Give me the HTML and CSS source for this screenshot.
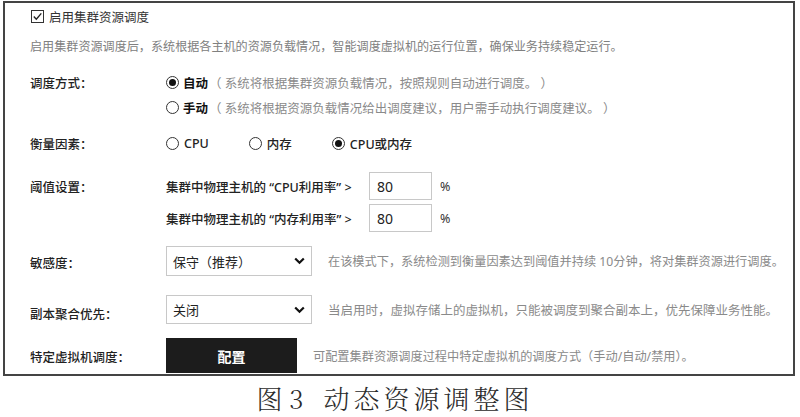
FILE: index.html
```html
<!DOCTYPE html>
<html lang="zh-CN">
<head>
<meta charset="utf-8">
<title>动态资源调整图</title>
<link rel="stylesheet" href="styles.css">
</head>
<body>
<div class="frame">
  <div class="row-check">
    <svg class="checkbox" width="13" height="13" viewBox="0 0 13 13"><rect x="0.5" y="0.5" width="12" height="12" fill="#fff" stroke="#333" stroke-width="1"/><path d="M2.8 6.6 L5.3 9.2 L10.3 3.4" fill="none" stroke="#222" stroke-width="1.4"/></svg>
    <span class="check-label">启用集群资源调度</span>
  </div>
  <div class="row-desc">启用集群资源调度后，系统根据各主机的资源负载情况，智能调度虚拟机的运行位置，确保业务持续稳定运行。</div>

  <div class="field field-mode">
    <div class="label">调度方式：</div>
    <div class="content">
      <div class="line"><span class="radio checked"></span><b class="opt">自动</b><span class="hint">（ 系统将根据集群资源负载情况，按照规则自动进行调度。 ）</span></div>
      <div class="line"><span class="radio"></span><b class="opt">手动</b><span class="hint">（ 系统将根据资源负载情况给出调度建议，用户需手动执行调度建议。 ）</span></div>
    </div>
  </div>

  <div class="field field-factor">
    <div class="label">衡量因素：</div>
    <div class="content radios">
      <span class="ritem"><span class="radio"></span><span class="rtext">CPU</span></span>
      <span class="ritem"><span class="radio"></span><span class="rtext">内存</span></span>
      <span class="ritem"><span class="radio checked"></span><span class="rtext">CPU或内存</span></span>
    </div>
  </div>

  <div class="field field-threshold">
    <div class="label">阈值设置：</div>
    <div class="content">
      <div class="tline"><span class="ttext">集群中物理主机的 “CPU利用率” &gt;</span><span class="input">80</span><span class="pct">%</span></div>
      <div class="tline"><span class="ttext">集群中物理主机的 “内存利用率” &gt;</span><span class="input">80</span><span class="pct">%</span></div>
    </div>
  </div>

  <div class="field field-sens">
    <div class="label">敏感度：</div>
    <div class="content inline">
      <div class="select"><span>保守（推荐）</span><svg class="chev" width="11" height="8" viewBox="0 0 11 8"><path d="M1.2 1.5 L5.5 5.8 L9.8 1.5" fill="none" stroke="#111" stroke-width="2.2"/></svg></div>
      <span class="hint side">在该模式下，系统检测到衡量因素达到阈值并持续 10分钟，将对集群资源进行调度。</span>
    </div>
  </div>

  <div class="field field-replica">
    <div class="label label-low">副本聚合优先：</div>
    <div class="content inline">
      <div class="select"><span>关闭</span><svg class="chev" width="11" height="8" viewBox="0 0 11 8"><path d="M1.2 1.5 L5.5 5.8 L9.8 1.5" fill="none" stroke="#111" stroke-width="2.2"/></svg></div>
      <span class="hint side">当启用时，虚拟存储上的虚拟机，只能被调度到聚合副本上，优先保障业务性能。</span>
    </div>
  </div>

  <div class="field field-vm">
    <div class="label">特定虚拟机调度：</div>
    <div class="content inline">
      <div class="button">配置</div>
      <span class="hint side">可配置集群资源调度过程中特定虚拟机的调度方式（手动/自动/禁用）。</span>
    </div>
  </div>
</div>
<div class="caption"><span class="fig">图 3</span><span class="title">动态资源调整图</span></div>
</body>
</html>
```

FILE: styles.css
```css
html, body {
  margin: 0;
  padding: 0;
  background: #fff;
}
body {
  width: 800px;
  height: 417px;
  overflow: hidden;
  font-family: "Noto Sans", "Noto Sans CJK SC", sans-serif;
  font-size: 12.5px;
  color: #222;
}
.frame {
  box-sizing: border-box;
  margin: 1px 0 0 3px;
  width: 792px;
  height: 375px;
  border: 2px solid #444;
  padding-left: 25px;
  display: flex;
  flex-direction: column;
}
.row-check {
  height: 26px;
  display: flex;
  align-items: center;
  padding-left: 1px;
}
.checkbox {
  display: block;
  margin-right: 5px;
}
.check-label {
  color: #333;
}
.row-desc {
  height: 34px;
  display: flex;
  align-items: center;
  color: #808080;
  font-size: 12.1px;
  white-space: nowrap;
}
.field {
  display: flex;
}
.label {
  width: 136px;
  flex: none;
  color: #222;
  font-weight: 500;
  display: flex;
  align-items: center;
}
.content {
  flex: 1;
}
.field-mode {
  margin-top: 7px;
}
.field-mode .label {
  height: 25px;
  align-self: flex-start;
}
.line {
  height: 25px;
  display: flex;
  align-items: center;
  white-space: pre;
}
.radio {
  box-sizing: border-box;
  width: 13px;
  height: 13px;
  border: 1px solid #333;
  border-radius: 50%;
  flex: none;
  position: relative;
  background: #fff;
}
.radio.checked::after {
  content: "";
  position: absolute;
  left: 2px;
  top: 2px;
  width: 7px;
  height: 7px;
  border-radius: 50%;
  background: #111;
}
.opt {
  margin-left: 4px;
  font-weight: 700;
  color: #111;
}
.hint {
  color: #8a8a8a;
  white-space: nowrap;
}
.line .hint {
  margin-left: 1px;
  white-space: pre;
}
.field-factor {
  margin-top: 10px;
  height: 26px;
}
.radios {
  display: flex;
  align-items: center;
  gap: 40px;
}
.ritem {
  display: flex;
  align-items: center;
}
.rtext {
  margin-left: 5px;
  color: #222;
  font-weight: 500;
}
.field-threshold {
  margin-top: 14px;
}
.field-threshold .label {
  height: 32px;
  align-self: flex-start;
}
.tline {
  height: 32px;
  display: flex;
  align-items: center;
}
.ttext {
  width: 203px;
  font-weight: 500;
  color: #222;
}
.input {
  box-sizing: border-box;
  width: 63px;
  height: 28px;
  border: 1px solid #c8c8c8;
  padding-left: 7px;
  display: flex;
  align-items: center;
  font-size: 14px;
  color: #222;
}
.pct {
  margin-left: 8px;
  color: #333;
}
.field-sens {
  margin-top: 12px;
  height: 30px;
}
.field-sens .label {
  padding-top: 3px;
}
.inline {
  display: flex;
  align-items: center;
}
.select {
  box-sizing: border-box;
  width: 146px;
  height: 30px;
  border: 1px solid #c8c8c8;
  display: flex;
  align-items: center;
  justify-content: space-between;
  padding: 0 6px 0 6px;
  font-size: 13px;
  color: #222;
  flex: none;
}
.chev {
  display: block;
}
.side {
  margin-left: 16px;
  font-size: 12.2px;
}
.field-replica {
  margin-top: 19px;
  height: 29px;
}
.field-replica .select {
  height: 29px;
}
.field-replica .side {
  font-size: 12.5px;
}
.label-low {
  padding-top: 7px;
}
.field-vm {
  margin-top: 14px;
  height: 35px;
}
.field-vm .label {
  padding-top: 1px;
}
.button {
  box-sizing: border-box;
  width: 131px;
  height: 35px;
  background: #1c1c1c;
  color: #fff;
  font-weight: 700;
  font-size: 14px;
  display: flex;
  align-items: center;
  justify-content: center;
  flex: none;
}
.caption {
  height: 41px;
  padding-top: 3px;
  box-sizing: border-box;
  display: flex;
  align-items: center;
  justify-content: center;
  font-family: "Noto Serif CJK SC", "Noto Sans CJK SC", serif;
  font-weight: 300;
  font-size: 26px;
  line-height: 34px;
  color: #2a2a2a;
  padding-right: 10px;
}
.title {
  margin-left: 20px;
  letter-spacing: 4px;
}
```
